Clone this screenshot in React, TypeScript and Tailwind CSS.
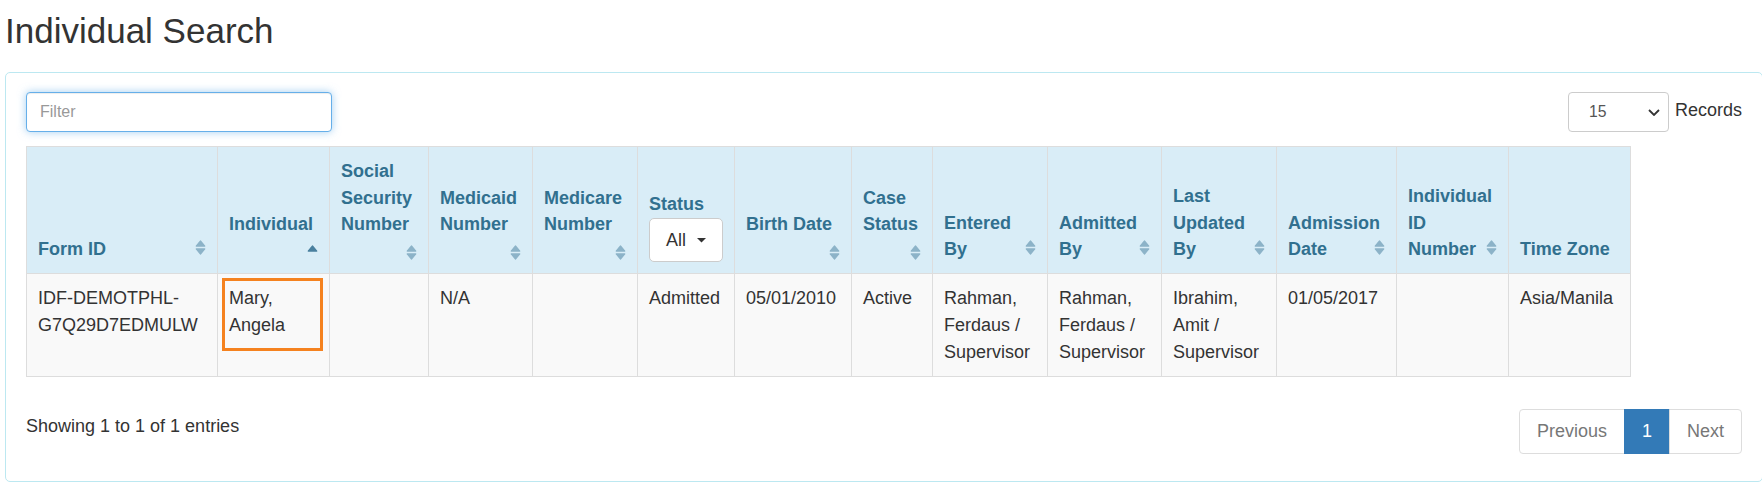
import React from "react";

type Head = { lines: string[]; icon: "same" | "own" | "sorted" | "none"; status?: boolean };

const colClasses = [
  "w-[191px]",
  "w-[112px]",
  "w-[99px]",
  "w-[104px]",
  "w-[105px]",
  "w-[97px]",
  "w-[117px]",
  "w-[81px]",
  "w-[115px]",
  "w-[114px]",
  "w-[115px]",
  "w-[120px]",
  "w-[112px]",
  "w-[122px]",
];

const heads: Head[] = [
  { lines: ["Form ID"], icon: "same" },
  { lines: ["Individual"], icon: "sorted" },
  { lines: ["Social", "Security", "Number"], icon: "own" },
  { lines: ["Medicaid", "Number"], icon: "own" },
  { lines: ["Medicare", "Number"], icon: "own" },
  { lines: ["Status"], icon: "none", status: true },
  { lines: ["Birth Date"], icon: "own" },
  { lines: ["Case", "Status"], icon: "own" },
  { lines: ["Entered", "By"], icon: "same" },
  { lines: ["Admitted", "By"], icon: "same" },
  { lines: ["Last", "Updated", "By"], icon: "same" },
  { lines: ["Admission", "Date"], icon: "same" },
  { lines: ["Individual", "ID", "Number"], icon: "same" },
  { lines: ["Time Zone"], icon: "none" },
];

const cells: string[][] = [
  ["IDF-DEMOTPHL-", "G7Q29D7EDMULW"],
  ["Mary,", "Angela"],
  [],
  ["N/A"],
  [],
  ["Admitted"],
  ["05/01/2010"],
  ["Active"],
  ["Rahman,", "Ferdaus /", "Supervisor"],
  ["Rahman,", "Ferdaus /", "Supervisor"],
  ["Ibrahim,", "Amit /", "Supervisor"],
  ["01/05/2017"],
  [],
  ["Asia/Manila"],
];

function SortBoth() {
  return (
    <svg width="11" height="15" viewBox="0 0 11 15" className="block shrink-0">
      <path d="M1.2 6.1 L5.5 1 L9.8 6.1 Z" fill="#8cb3c8" stroke="#8cb3c8" strokeWidth="1.2" strokeLinejoin="round" />
      <path d="M1.2 8.9 L9.8 8.9 L5.5 14 Z" fill="#8cb3c8" stroke="#8cb3c8" strokeWidth="1.2" strokeLinejoin="round" />
    </svg>
  );
}

function SortUp() {
  return (
    <svg width="11" height="7" viewBox="0 0 11 7" className="block shrink-0">
      <path d="M1.2 6.1 L5.5 1 L9.8 6.1 Z" fill="#4a809f" stroke="#4a809f" strokeWidth="1.2" strokeLinejoin="round" />
    </svg>
  );
}

function HeaderCell({ h }: { h: Head }) {
  const last = h.lines.length - 1;
  return (
    <th className="border border-[#dddddd] bg-[#d9edf7] px-[11px] pb-[10px] pt-[11px] align-bottom text-left font-bold text-[#31708f]">
      <div className="flex flex-col">
        {h.lines.map((l, i) =>
          i === last && h.icon === "same" ? (
            <div key={i} className="flex justify-between whitespace-nowrap">
              <span>{l}</span>
              <span className="mt-[4px]">
                <SortBoth />
              </span>
            </div>
          ) : (
            <div key={i} className="whitespace-nowrap">
              {l}
            </div>
          )
        )}
        {h.icon === "own" && (
          <div className="flex h-[25px] justify-end pt-[6.5px]">
            <SortBoth />
          </div>
        )}
        {h.icon === "sorted" && (
          <div className="flex h-[25px] justify-end pt-[6.5px]">
            <SortUp />
          </div>
        )}
        {h.status && (
          <div className="mb-[1px]">
            <div className="flex h-[44px] w-[74px] items-center rounded-[5px] border border-[#cccccc] bg-white pl-[16px] font-normal text-[#333333]">
              <span>All</span>
              <svg width="9" height="5" viewBox="0 0 9 5" className="ml-[11px] block">
                <path d="M0 0 L9 0 L4.5 4.5 Z" fill="#333333" />
              </svg>
            </div>
          </div>
        )}
      </div>
    </th>
  );
}

export default function App() {
  return (
    <div className="h-[483px] w-[1762px] overflow-hidden bg-white pt-[12px] font-['Liberation_Sans',Arial,sans-serif] text-[18px] leading-[26.7px] text-[#333333]">
      <h2 className="ml-[5px] h-[38px] text-[35px] font-normal leading-[38px] text-[#333333]">Individual Search</h2>
      <div className="ml-[5px] mt-[22px] w-[1758px] rounded-[5px] border border-[#bce8f1] bg-white px-[20px] pb-[27px] pt-[19px]">
        <div className="flex items-start justify-between">
          <input
            placeholder="Filter"
            className="h-[40px] w-[306px] rounded-[4px] border border-[#66afe9] bg-white px-[13px] text-[16px] text-[#555555] shadow-[inset_0_1px_1px_rgba(0,0,0,0.075),0_0_8px_rgba(102,175,233,0.6)] outline-none placeholder:text-[#999999]"
          />
          <div className="flex items-start">
            <div className="flex h-[40px] w-[101px] items-center justify-between rounded-[4px] border border-[#cccccc] bg-white pl-[20px] pr-[8px] text-[15.75px] text-[#555555]">
              <span>15</span>
              <svg width="12" height="7" viewBox="0 0 12 7" className="block">
                <path d="M1 1 L6 6 L11 1" fill="none" stroke="#333333" strokeWidth="1.8" />
              </svg>
            </div>
            <span className="ml-[6px] mt-[5px]">Records</span>
          </div>
        </div>

        <table className="mt-[14px] w-[1604px] table-fixed border-collapse">
          <colgroup>
            {colClasses.map((c, i) => (
              <col key={i} className={c} />
            ))}
          </colgroup>
          <thead>
            <tr>
              {heads.map((h, i) => (
                <HeaderCell key={i} h={h} />
              ))}
            </tr>
          </thead>
          <tbody>
            <tr>
              {cells.map((c, i) => (
                <td
                  key={i}
                  className="relative border border-[#dddddd] bg-[#f9f9f9] px-[11px] py-[11px] align-top text-[#333333]"
                >
                  {c.length === 0 ? (
                    <div className="h-[80.1px]" />
                  ) : (
                    c.map((l, j) => (
                      <div key={j} className="whitespace-nowrap">
                        {l}
                      </div>
                    ))
                  )}
                  {i === 1 && (
                    <div className="absolute left-[4px] top-[4px] h-[73px] w-[101px] border-[3px] border-[#f5821f]" />
                  )}
                </td>
              ))}
            </tr>
          </tbody>
        </table>

        <div className="mt-[32px] flex items-start justify-between">
          <div className="pt-[4px]">Showing 1 to 1 of 1 entries</div>
          <div className="flex">
            <span className="rounded-l-[4px] border border-[#dddddd] bg-white px-[17px] py-[8px] text-[#777777]">
              Previous
            </span>
            <span className="-ml-px border border-[#337ab7] bg-[#337ab7] px-[17px] py-[8px] text-white">1</span>
            <span className="-ml-px rounded-r-[4px] border border-[#dddddd] bg-white px-[17px] py-[8px] text-[#777777]">
              Next
            </span>
          </div>
        </div>
      </div>
    </div>
  );
}
